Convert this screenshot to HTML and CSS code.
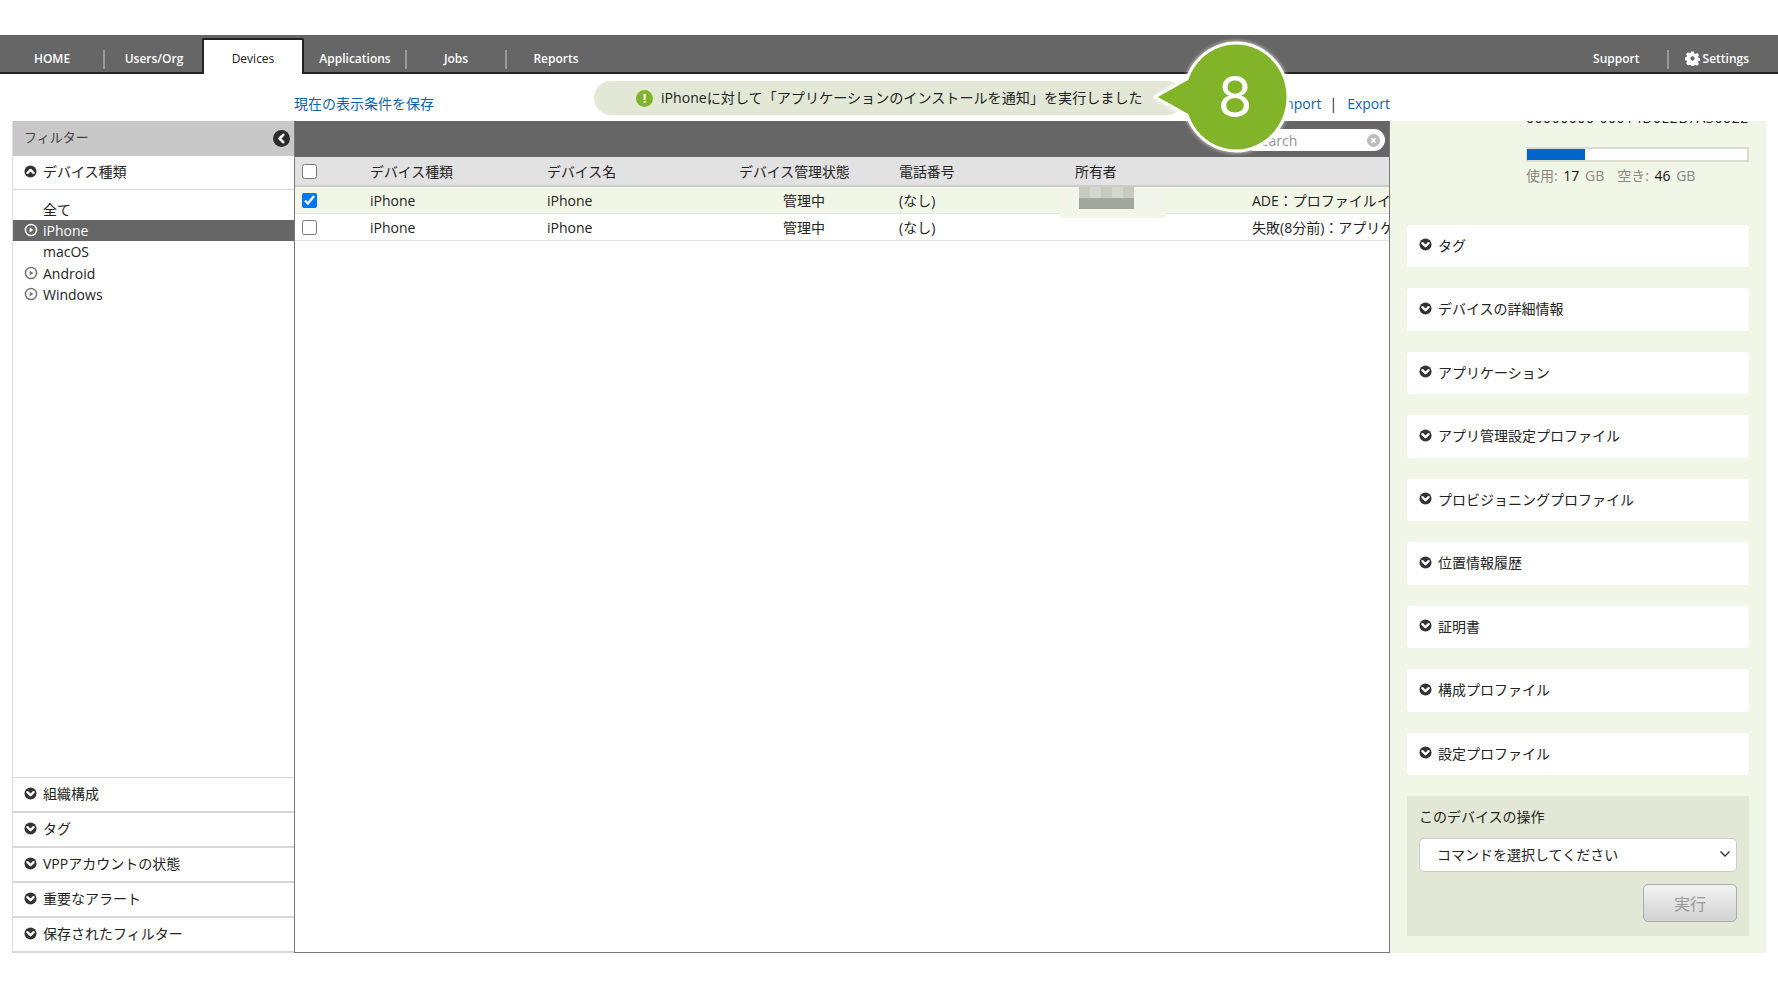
FILE: index.html
```html
<!DOCTYPE html>
<html lang="ja">
<head>
  <meta charset="utf-8">
  <title>Devices</title>
  <link rel="stylesheet" href="styles.css">
</head>
<body>

<svg class="defs" width="0" height="0">
  <symbol id="i-down" viewBox="0 0 14 14">
    <circle cx="7" cy="7" r="6.5" fill="#333"/>
    <path d="M3.7 5.6 7 8.9l3.3-3.3" fill="none" stroke="#fff" stroke-width="2.6" stroke-linecap="round" stroke-linejoin="round"/>
  </symbol>
  <symbol id="i-up" viewBox="0 0 14 14">
    <circle cx="7" cy="7" r="6.5" fill="#333"/>
    <path d="M3.7 8.6 7 5.3l3.3 3.3" fill="none" stroke="#fff" stroke-width="2.6" stroke-linecap="round" stroke-linejoin="round"/>
  </symbol>
  <symbol id="i-left" viewBox="0 0 17 17">
    <circle cx="8.5" cy="8.5" r="8.5" fill="#2b2b2b"/>
    <path d="M10.2 4.8 6.6 8.5l3.6 3.7" fill="none" stroke="#fff" stroke-width="2.6" stroke-linecap="round" stroke-linejoin="round"/>
  </symbol>
  <symbol id="i-ring" viewBox="0 0 14 14">
    <circle cx="7" cy="7" r="5.6" fill="none" stroke="currentColor" stroke-width="1.5"/>
    <path d="M5.6 4.4 9.4 7l-3.8 2.6z" fill="currentColor"/>
  </symbol>
</svg>

<nav class="topnav">
  <a class="tab tab-home">HOME</a><span class="nav-sep"></span>
  <a class="tab">Users/Org</a>
  <a class="tab tab-active">Devices</a>
  <a class="tab tab-apps">Applications</a><span class="nav-sep"></span>
  <a class="tab">Jobs</a><span class="nav-sep"></span>
  <a class="tab">Reports</a>
  <div class="nav-right">
    <a class="tab-support">Support</a><span class="nav-sep"></span>
    <a class="tab-settings">
      <svg class="gear" viewBox="0 0 16 16" width="15" height="15">
        <path fill="#fff" fill-rule="evenodd" d="M6.6.5h2.8l.4 2 1.3.6 1.8-1.1 2 2-1.1 1.8.6 1.3 2 .4v2.8l-2 .4-.6 1.3 1.1 1.8-2 2-1.8-1.1-1.3.6-.4 2H6.6l-.4-2-1.3-.6L3.100 15.200l-2-2 1.100-1.800-.6-1.300-2-.4V6.900l2-.4.6-1.300L1.100 3.400l2-2 1.800 1.100 1.300-.6zM8 5.700a2.300 2.300 0 1 0 0 4.600 2.300 2.300 0 0 0 0-4.600z"/>
      </svg>
      Settings
    </a>
  </div>
</nav>

<div class="toolbar">
  <a class="link save-link">現在の表示条件を保存</a>
  <div class="toast">
    <span class="toast-icon">!</span>
    iPhoneに対して「アプリケーションのインストールを通知」を実行しました
  </div>
  <div class="io-links">
    <a class="link">Import</a><span class="io-sep">|</span><a class="link">Export</a>
  </div>
</div>

<div class="content">
  <aside class="sidebar">
    <div class="side-head">
      <span>フィルター</span>
      <svg class="collapse" width="17" height="17"><use href="#i-left"/></svg>
    </div>
    <div class="acc acc-open"><svg class="acc-icon"><use href="#i-up"/></svg>デバイス種類</div>
    <ul class="type-list">
      <li>全て</li>
      <li class="on"><svg class="ring"><use href="#i-ring"/></svg>iPhone</li>
      <li>macOS</li>
      <li><svg class="ring"><use href="#i-ring"/></svg>Android</li>
      <li><svg class="ring"><use href="#i-ring"/></svg>Windows</li>
    </ul>
    <div class="acc"><svg class="acc-icon"><use href="#i-down"/></svg>組織構成</div>
    <div class="acc"><svg class="acc-icon"><use href="#i-down"/></svg>タグ</div>
    <div class="acc"><svg class="acc-icon"><use href="#i-down"/></svg>VPPアカウントの状態</div>
    <div class="acc"><svg class="acc-icon"><use href="#i-down"/></svg>重要なアラート</div>
    <div class="acc"><svg class="acc-icon"><use href="#i-down"/></svg>保存されたフィルター</div>
  </aside>

  <main class="main">
    <div class="main-bar">
      <div class="search">
        <span>Search</span>
        <span class="search-x">×</span>
      </div>
    </div>
    <table class="devices">
      <colgroup>
        <col class="c-check"><col class="c-type"><col class="c-name"><col class="c-state"><col class="c-phone"><col class="c-owner"><col>
      </colgroup>
      <thead>
        <tr>
          <th class="cell-check"><input type="checkbox"></th>
          <th>デバイス種類</th>
          <th>デバイス名</th>
          <th>デバイス管理状態</th>
          <th>電話番号</th>
          <th>所有者</th>
          <th></th>
        </tr>
      </thead>
      <tbody>
        <tr class="selected">
          <td class="cell-check"><input type="checkbox" checked></td>
          <td>iPhone</td>
          <td>iPhone</td>
          <td class="cell-state">管理中</td>
          <td>(なし)</td>
          <td class="cell-owner"><span class="blur"><i></i></span></td>
          <td>ADE：プロファイルインストール済み</td>
        </tr>
        <tr>
          <td class="cell-check"><input type="checkbox"></td>
          <td>iPhone</td>
          <td>iPhone</td>
          <td class="cell-state">管理中</td>
          <td>(なし)</td>
          <td></td>
          <td>失敗(8分前)：アプリケーションのインストール</td>
        </tr>
      </tbody>
    </table>
  </main>

  <aside class="detail">
    <div class="storage">
      <div class="serial">00000000-00014D0E2B7A30022</div>
      <div class="meter"><div class="meter-fill" style="width: 26.5%"></div></div>
      <div class="meter-text">使用: <b>17</b> GB<span class="gap"></span>空き: <b>46</b> GB</div>
    </div>
    <div class="cards">
      <div class="card"><svg class="acc-icon"><use href="#i-down"/></svg>タグ</div>
      <div class="card"><svg class="acc-icon"><use href="#i-down"/></svg>デバイスの詳細情報</div>
      <div class="card"><svg class="acc-icon"><use href="#i-down"/></svg>アプリケーション</div>
      <div class="card"><svg class="acc-icon"><use href="#i-down"/></svg>アプリ管理設定プロファイル</div>
      <div class="card"><svg class="acc-icon"><use href="#i-down"/></svg>プロビジョニングプロファイル</div>
      <div class="card"><svg class="acc-icon"><use href="#i-down"/></svg>位置情報履歴</div>
      <div class="card"><svg class="acc-icon"><use href="#i-down"/></svg>証明書</div>
      <div class="card"><svg class="acc-icon"><use href="#i-down"/></svg>構成プロファイル</div>
      <div class="card"><svg class="acc-icon"><use href="#i-down"/></svg>設定プロファイル</div>
    </div>
    <div class="ops">
      <div class="ops-title">このデバイスの操作</div>
      <div class="ops-select">
        <span>コマンドを選択してください</span>
        <svg width="12" height="8" viewBox="0 0 12 8"><path d="M1.500 1.500 6 6l4.500-4.500" fill="none" stroke="#333" stroke-width="1.400"/></svg>
      </div>
      <div class="ops-actions"><button class="run" disabled>実行</button></div>
    </div>
  </aside>
</div>

<div class="callout">
  <svg width="150" height="122" viewBox="0 0 150 122">
    <path d="M5 59 37 41A52 54 0 1 1 37 77Z" fill="#82b42a" stroke="#fff" stroke-width="3" stroke-linejoin="round"/>
    <text x="85" y="79" text-anchor="middle" class="callout-num">8</text>
  </svg>
</div>

</body>
</html>
```

FILE: styles.css
```css
body {
  margin: 0;
  padding-top: 35px;
  font-family: "Open Sans", "Noto Sans CJK JP", sans-serif;
  font-size: 14px;
  color: #222;
  background: #fff;
  position: relative;
}
.defs {
  position: absolute;
}

/* top nav */
.topnav {
  display: flex;
  align-items: center;
  height: 28px;
  padding-top: 9px;
  background: #666;
  border-bottom: 2px solid #222;
  color: #fff;
  font-size: 12px;
  font-weight: 600;
}
.tab {
  width: 100px;
  text-align: center;
}
.tab-home {
  width: 104px;
}
.tab-apps {
  width: 102px;
}
.tab-active {
  align-self: flex-start;
  width: 98px;
  height: 34px;
  line-height: 38px;
  margin: -6px 0 -2px -2px;
  background: #fff;
  color: #222;
  font-weight: 500;
  border: 2px solid #222;
  border-bottom: 0;
  border-radius: 2px 2px 0 0;
}
.nav-sep {
  width: 2px;
  height: 19px;
  background: #999;
  margin: 3px -1px 0;
}
.nav-right {
  display: flex;
  align-items: center;
  margin-left: auto;
  padding-right: 29px;
}
.tab-support {
  margin-right: 28px;
}
.tab-settings {
  display: flex;
  align-items: center;
  gap: 3px;
  margin-left: 17px;
}

/* save link, toast, import/export */
.toolbar {
  display: flex;
  height: 47px;
  padding: 0 388px 0 294px;
}
.link {
  color: #0d63a8;
}
.save-link {
  width: 300px;
  margin-top: 20px;
  line-height: 19px;
}
.toast {
  display: flex;
  align-items: center;
  width: 590px;
  height: 34px;
  margin-top: 7px;
  padding: 0 0 2px 42px;
  box-sizing: border-box;
  background: #e2e8d5;
  border-radius: 17px;
  font-size: 14.1px;
  white-space: nowrap;
}
.toast-icon {
  width: 17px;
  height: 17px;
  margin: 2px 8px 0 0;
  border-radius: 50%;
  background: #82b42a;
  color: #fff;
  font-size: 13px;
  font-weight: 700;
  line-height: 17px;
  text-align: center;
}
.io-links {
  display: flex;
  margin-left: auto;
  margin-top: 20px;
  line-height: 19px;
}
.io-sep {
  margin: 0 10px 0 8px;
}

/* three columns */
.content {
  display: flex;
  height: 832px;
  margin: 0 12px 0 12px;
}

/* left filter */
.sidebar {
  display: flex;
  flex-direction: column;
  width: 282px;
  box-sizing: border-box;
  border-left: 1px solid #ddd;
}
.side-head {
  display: flex;
  align-items: center;
  justify-content: space-between;
  height: 31px;
  padding: 0 4px 4px 11px;
  background: #c8c8c8;
  color: #444;
  font-size: 13px;
}
.collapse {
  margin-top: 4px;
}
.acc {
  display: flex;
  align-items: center;
  height: 30px;
  padding: 0 0 3px 11px;
  border-bottom: 2px solid #d8d8d8;
}
.acc-open {
  border-bottom-width: 1px;
  height: 30px;
}
.acc-icon {
  width: 13px;
  height: 13px;
  margin-right: 6px;
  flex-shrink: 0;
}
.type-list {
  flex: 1;
  margin: 0;
  padding: 9px 0 0;
  list-style: none;
  border-bottom: 1px solid #d8d8d8;
}
.type-list li {
  position: relative;
  height: 21.2px;
  line-height: 21.2px;
  padding-left: 30px;
}
.type-list li.on {
  background: #666;
  color: #fff;
}
.ring {
  position: absolute;
  left: 11px;
  top: 3px;
  width: 14px;
  height: 14px;
  color: #777;
}
.on .ring {
  color: #fff;
}

/* device table */
.main {
  width: 1096px;
  box-sizing: border-box;
  border: 1px solid #777;
  border-top: 0;
  overflow: hidden;
}
.main-bar {
  display: flex;
  justify-content: flex-end;
  align-items: center;
  height: 36px;
  padding-right: 4px;
  background: #666;
}
.search {
  display: flex;
  align-items: center;
  justify-content: space-between;
  width: 141px;
  height: 22px;
  margin-top: 2px;
  padding: 0 5px 0 9px;
  box-sizing: border-box;
  background: #fff;
  border-radius: 11px;
  color: #8a94a0;
  font-size: 14px;
}
.search-x {
  width: 13px;
  height: 13px;
  border-radius: 50%;
  background: #bbb;
  color: #fff;
  font-size: 12px;
  font-weight: 700;
  line-height: 13px;
  text-align: center;
}
.devices {
  width: 100%;
  table-layout: fixed;
  border-collapse: collapse;
}
.c-check { width: 75px; }
.c-type { width: 177px; }
.c-name { width: 192px; }
.c-state { width: 160px; }
.c-phone { width: 176px; }
.c-owner { width: 177px; }
.devices th {
  height: 28px;
  padding: 0;
  background: #e2e2e2;
  border-bottom: 2px solid #ccc;
  text-align: left;
  font-size: 13.9px;
  font-weight: 400;
}
.devices td {
  height: 26px;
  padding: 0;
  border-bottom: 1px solid #e6e6e6;
  white-space: nowrap;
  overflow: hidden;
}
.selected td {
  background: #f1f7e6;
}
.cell-check {
  padding-left: 7px !important;
}
.cell-check input {
  display: block;
  width: 15px;
  height: 15px;
  margin: 0;
}
.cell-state {
  padding-left: 44px !important;
}
td.cell-owner {
  overflow: visible;
  position: relative;
}
.blur {
  position: absolute;
  left: -15px;
  top: 0;
  width: 105px;
  height: 31px;
  background: #f2f6ea;
}
.blur i {
  position: absolute;
  left: 19px;
  top: 0;
  width: 55px;
  height: 22px;
  background:
    repeating-linear-gradient(90deg, #c6cbbf 0 11px, #d3d7cc 11px 22px) top / 100% 50% no-repeat,
    linear-gradient(#ccd1c6 50%, #a3a69c 50%);
}

/* right detail */
.detail {
  width: 376px;
  box-sizing: border-box;
  padding: 0 17px;
  background: #f1f7e6;
  overflow: hidden;
}
.storage {
  display: flow-root;
  height: 103.5px;
  padding-left: 119px;
}
.serial {
  margin-top: -12px;
  height: 17px;
  line-height: 17px;
  font-size: 14px;
  letter-spacing: 0.55px;
  white-space: nowrap;
  overflow: hidden;
}
.meter {
  height: 11px;
  margin-top: 21px;
  background: #fff;
  border: 2px solid #dcdccf;
  border-left-width: 1px;
}
.meter-fill {
  height: 100%;
  background: #0066cc;
}
.meter-text {
  margin-top: 4px;
  color: #888;
  line-height: 19px;
  word-spacing: 2px;
}
.meter-text b {
  font-weight: 500;
  color: #111;
}
.gap {
  display: inline-block;
  width: 13px;
}
.cards {
  display: flex;
  flex-direction: column;
  gap: 21px;
}
.card {
  display: flex;
  align-items: center;
  height: 40.5px;
  padding: 0 0 2px 12px;
  background: #fff;
  border-radius: 3px;
}
.ops {
  height: 139.5px;
  margin-top: 21px;
  padding: 11px 12px 0;
  box-sizing: border-box;
  background: #e2e8d5;
}
.ops-title {
  line-height: 20px;
}
.ops-select {
  display: flex;
  align-items: center;
  justify-content: space-between;
  height: 34px;
  margin-top: 11px;
  padding: 0 5px 2px 17px;
  box-sizing: border-box;
  background: #fff;
  border: 1px solid #ccc;
  border-radius: 5px;
}
.ops-actions {
  display: flex;
  justify-content: flex-end;
  margin-top: 12px;
}
.run {
  width: 94px;
  height: 38px;
  padding: 0;
  font-family: inherit;
  font-size: 16px;
  color: #999;
  background: linear-gradient(#f2f2f2, #d2d2d2);
  border: 1px solid #aaa;
  border-radius: 5px;
}

/* step number bubble */
.callout {
  position: absolute;
  left: 1150px;
  top: 38px;
  width: 150px;
  height: 122px;
}
.callout svg {
  display: block;
  overflow: visible;
  filter: drop-shadow(0 0 2px rgba(255, 255, 255, 0.8));
}
.callout-num {
  font-family: "Inter", sans-serif;
  font-size: 56px;
  font-weight: 400;
  fill: #fff;
}
```
